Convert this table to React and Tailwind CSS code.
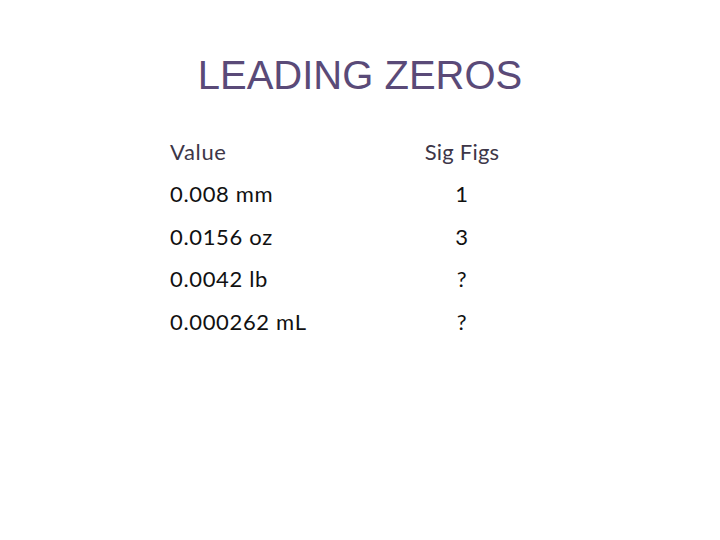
import { Fragment } from "react";

const rows = [
  ["0.008 mm", "1"],
  ["0.0156 oz", "3"],
  ["0.0042 lb", "?"],
  ["0.000262 mL", "?"],
];

export default function App() {
  return (
    <div className="w-[720px] h-[540px] bg-white overflow-hidden">
      <h1
        className="pt-[51px] text-center text-[40px] leading-[48px] text-[#5a4a78]"
        style={{ fontFamily: '"Liberation Sans", Arial, sans-serif' }}
      >
        LEADING ZEROS
      </h1>

      <div
        className="mt-[32px] pl-[170px] grid grid-cols-[252px_80px] text-[22px] tracking-[0.03em] leading-[42.4px] text-[#111]"
        style={{ fontFamily: 'Lato, "Noto Sans", sans-serif' }}
      >
        <div className="text-[#3d3648]">Value</div>
        <div className="text-center whitespace-nowrap tracking-[0.01em] text-[#3d3648]">
          Sig Figs
        </div>
        {rows.map(([value, figs]) => (
          <Fragment key={value}>
            <div>{value}</div>
            <div className="text-center">{figs}</div>
          </Fragment>
        ))}
      </div>
    </div>
  );
}
